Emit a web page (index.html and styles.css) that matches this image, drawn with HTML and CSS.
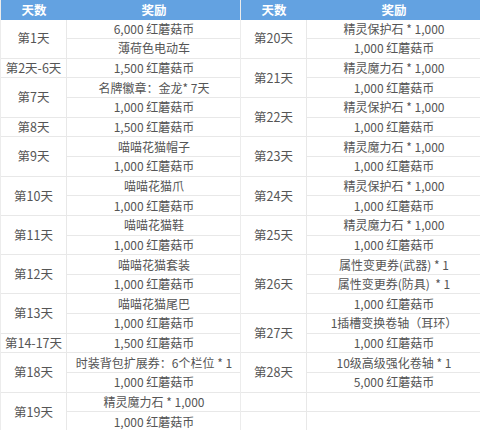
FILE: index.html
```html
<!DOCTYPE html>
<html lang="zh-CN">
<head>
<meta charset="utf-8">
<title>签到奖励</title>
<link rel="stylesheet" href="styles.css">
</head>
<body>
<div class="wrap">
  <div class="tbl">
    <div class="hd">天数</div><div class="hd">奖励</div>
    <div class="day s2">第1天</div><div class="rw">6,000 红蘑菇币</div><div class="rw">薄荷色电动车</div>
    <div class="day">第2天-6天</div><div class="rw">1,500 红蘑菇币</div>
    <div class="day s2">第7天</div><div class="rw">名牌徽章：金龙* 7天</div><div class="rw">1,000 红蘑菇币</div>
    <div class="day">第8天</div><div class="rw">1,500 红蘑菇币</div>
    <div class="day s2">第9天</div><div class="rw">喵喵花猫帽子</div><div class="rw">1,000 红蘑菇币</div>
    <div class="day s2">第10天</div><div class="rw">喵喵花猫爪</div><div class="rw">1,000 红蘑菇币</div>
    <div class="day s2">第11天</div><div class="rw">喵喵花猫鞋</div><div class="rw">1,000 红蘑菇币</div>
    <div class="day s2">第12天</div><div class="rw">喵喵花猫套装</div><div class="rw">1,000 红蘑菇币</div>
    <div class="day s2">第13天</div><div class="rw">喵喵花猫尾巴</div><div class="rw">1,000 红蘑菇币</div>
    <div class="day">第14-17天</div><div class="rw">1,500 红蘑菇币</div>
    <div class="day s2">第18天</div><div class="rw">时装背包扩展券：6个栏位 * 1</div><div class="rw">1,000 红蘑菇币</div>
    <div class="day s2">第19天</div><div class="rw">精灵魔力石 * 1,000</div><div class="rw">1,000 红蘑菇币</div>
  </div>
  <div class="tbl">
    <div class="hd">天数</div><div class="hd">奖励</div>
    <div class="day s2">第20天</div><div class="rw">精灵保护石 * 1,000</div><div class="rw">1,000 红蘑菇币</div>
    <div class="day s2">第21天</div><div class="rw">精灵魔力石 * 1,000</div><div class="rw">1,000 红蘑菇币</div>
    <div class="day s2">第22天</div><div class="rw">精灵保护石 * 1,000</div><div class="rw">1,000 红蘑菇币</div>
    <div class="day s2">第23天</div><div class="rw">精灵魔力石 * 1,000</div><div class="rw">1,000 红蘑菇币</div>
    <div class="day s2">第24天</div><div class="rw">精灵保护石 * 1,000</div><div class="rw">1,000 红蘑菇币</div>
    <div class="day s2">第25天</div><div class="rw">精灵魔力石 * 1,000</div><div class="rw">1,000 红蘑菇币</div>
    <div class="day s3">第26天</div><div class="rw">属性变更券(武器) * 1</div><div class="rw">属性变更券(防具)&nbsp; * 1</div><div class="rw">1,000 红蘑菇币</div>
    <div class="day s2">第27天</div><div class="rw">1插槽变换卷轴（耳环）</div><div class="rw">1,000 红蘑菇币</div>
    <div class="day s2">第28天</div><div class="rw">10级高级强化卷轴 * 1</div><div class="rw">5,000 红蘑菇币</div>
    <div class="day"></div><div class="rw"></div>
    <div class="day"></div><div class="rw"></div>
  </div>
</div>
</body>
</html>
```

FILE: styles.css
```css
html, body {
  margin: 0;
  padding: 0;
  background: #ffffff;
}
body {
  font-family: "Noto Sans CJK SC", "Noto Sans", sans-serif;
  color: #555555;
  font-size: 12px;
}
.wrap {
  display: flex;
  width: 480px;
  height: 430px;
  overflow: hidden;
}
.tbl {
  width: 240px;
  display: grid;
  grid-template-columns: 66px 174px;
  grid-template-rows: 19.5px repeat(21, 19.65px);
  border-left: 1px solid #ececec;
  box-sizing: border-box;
}
.hd {
  background: #63a2e1;
  color: #ffffff;
  font-weight: bold;
  font-size: 12.5px;
  display: flex;
  align-items: center;
  justify-content: center;
}
.day, .rw {
  display: flex;
  align-items: center;
  justify-content: center;
  white-space: nowrap;
  border-bottom: 1px solid #e8e8e8;
  box-sizing: border-box;
  line-height: 1;
}
.day {
  border-right: 1px solid #e8e8e8;
  font-size: 12.5px;
}
.s2 { grid-row: span 2; }
.s3 { grid-row: span 3; }
```
